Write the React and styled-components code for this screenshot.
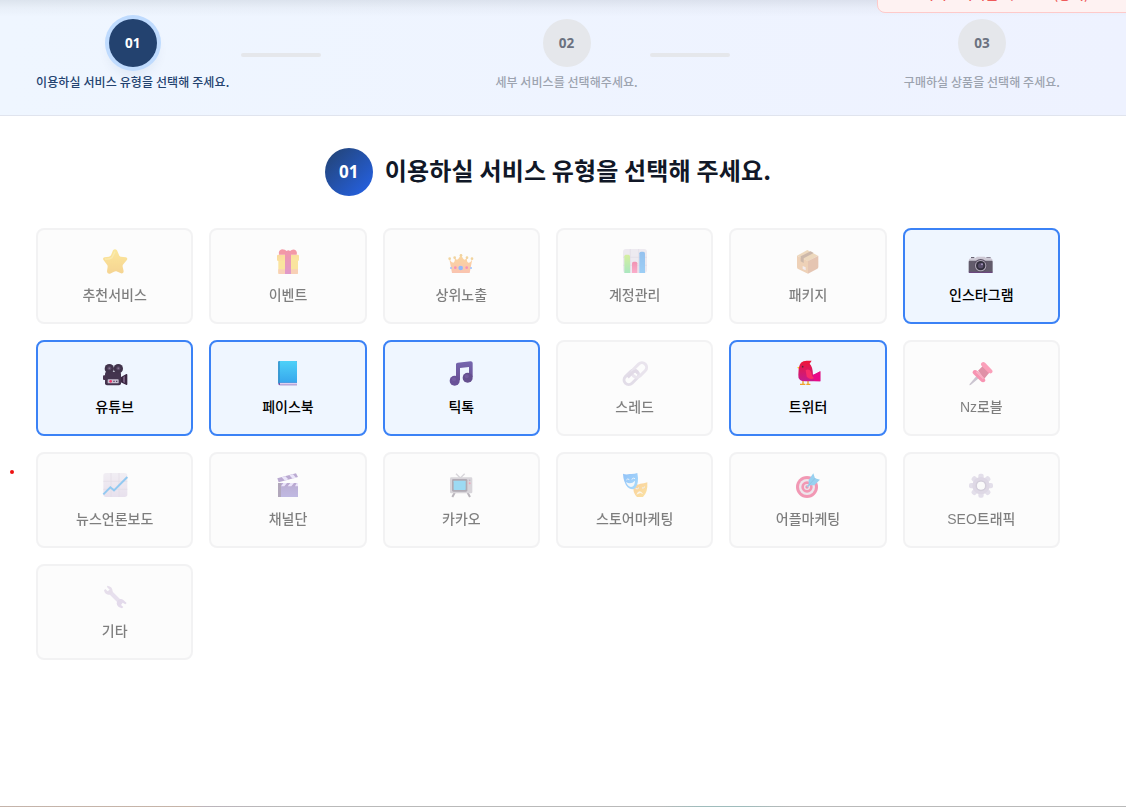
import React from "react";
import styled, { createGlobalStyle, css } from "styled-components";

const Global = createGlobalStyle`
  *, *::before, *::after { box-sizing: border-box; }
  html, body { margin: 0; padding: 0; background: #fff; }
  body {
    font-family: "Noto Sans CJK KR", "Noto Sans", sans-serif;
    color: #000;
    overflow: hidden;
  }
`;

const Page = styled.div`
  position: relative;
  display: flex;
  flex-direction: column;
  height: 807px;
  overflow: hidden;
  background: #fff;
`;

const StepBar = styled.header`
  display: flex;
  justify-content: space-between;
  height: 116px;
  padding: 19px 66px 24px 36px;
  border-bottom: 1px solid #e0e4ee;
  background: linear-gradient(to bottom, rgba(30, 41, 59, 0.09), rgba(30, 41, 59, 0.03) 8px, transparent 17px),
    linear-gradient(to right, #eff6ff, #eef2ff);
`;

const Step = styled.div`
  display: flex;
  align-items: center;
  gap: 12px;
`;

const StepBody = styled.div`
  display: flex;
  flex-direction: column;
  align-items: center;
  gap: 7px;
`;

const StepNumber = styled.div`
  display: grid;
  place-items: center;
  width: 48px;
  height: 48px;
  border-radius: 50%;
  font: 700 13.5px/20px "Noto Sans", sans-serif;
  color: ${(p) => (p.$active ? "#fff" : "#6b7280")};
  background: ${(p) => (p.$active ? "#23426f" : "#e5e7eb")};
  ${(p) =>
    p.$active &&
    css`
      box-shadow: 0 0 0 4px #bfdbfe, 0 8px 12px rgba(30, 58, 110, 0.08);
    `}
`;

const StepLabel = styled.div`
  padding-bottom: 1px;
  font-size: 12px;
  line-height: 16px;
  font-weight: 500;
  white-space: nowrap;
  letter-spacing: ${(p) => (p.$active ? "0.11px" : "0.06px")};
  color: ${(p) => (p.$active ? "#23426f" : "#9ca3af")};
`;

const StepLine = styled.div`
  width: 80px;
  height: 4px;
  border-radius: 2px;
  background: #e5e7eb;
`;

const Notice = styled.div`
  position: absolute;
  top: -31px;
  left: 877px;
  display: flex;
  gap: 39px;
  width: 262px;
  height: 44px;
  padding: 13px 0 0 43px;
  border: 1px solid #fecaca;
  border-radius: 8px;
  background: #fef2f2;
  color: #ef5a5a;
  font-size: 14px;
  line-height: 20px;
  font-weight: 500;
  white-space: nowrap;
`;

const Main = styled.main`
  display: flex;
  flex-direction: column;
  gap: 32px;
  padding: 32px 66px 0 36px;
`;

const Heading = styled.div`
  display: flex;
  align-items: center;
  justify-content: center;
  gap: 12px;
`;

const HeadingNumber = styled.div`
  display: grid;
  place-items: center;
  width: 48px;
  height: 48px;
  padding-bottom: 1px;
  border-radius: 50%;
  font: 700 17px/28px "Noto Sans", sans-serif;
  color: #fff;
  background: linear-gradient(135deg, #23426f, #2563eb);
`;

const Title = styled.h2`
  margin: 0;
  padding-bottom: 4px;
  font-size: 24px;
  line-height: 32px;
  font-weight: 700;
  letter-spacing: 0.17px;
  color: #111827;
`;

const Grid = styled.div`
  display: grid;
  grid-template-columns: repeat(6, 1fr);
  gap: 16px;
`;

const Card = styled.button`
  display: flex;
  flex-direction: column;
  align-items: center;
  gap: 7px;
  height: 96px;
  padding: 16px 0;
  border: 2px solid ${(p) => (p.$on ? "#3b82f6" : "#e6e6e8")};
  border-radius: 8px;
  background: ${(p) => (p.$on ? "#eff6ff" : "#fafafa")};
  opacity: ${(p) => (p.$on ? 1 : 0.5)};
  font-family: inherit;
  color: #000;
`;

const IconBox = styled.span`
  display: grid;
  place-items: center;
  height: 32px;
  filter: ${(p) => (p.$on ? "none" : "saturate(1.1) brightness(0.97)")};
  svg {
    width: 24px;
    height: 24px;
    overflow: visible;
  }
`;

const CardLabel = styled.span`
  padding-bottom: 1px;
  font-family: "Liberation Sans", "Noto Sans CJK KR", sans-serif;
  font-size: 14px;
  line-height: 20px;
  font-weight: 500;
  white-space: nowrap;
`;

const Dot = styled.i`
  position: absolute;
  left: 9.5px;
  top: 469.5px;
  width: 4px;
  height: 4px;
  border-radius: 50%;
  background: #ee1111;
`;

const BottomEdge = styled.div`
  height: 1px;
  margin-top: auto;
  background: linear-gradient(
    to right,
    #c4b3aa 0,
    #c6b4a8 190px,
    #bbb4bb 205px,
    #b9b9b9 290px,
    #b9b9b9 660px,
    #9fbcbc 700px,
    #9fbcbc 745px,
    #b9b9b9 790px
  );
`;

const Lg = ({ id, from, to, v = true }) => (
  <linearGradient id={id} x1="0" y1="0" x2={v ? "0" : "1"} y2="1">
    <stop offset="0" stopColor={from} />
    <stop offset="1" stopColor={to} />
  </linearGradient>
);

const art = {
  star: (
    <>
      <Lg id="star" from="#ffd74a" to="#eeb035" />
      <path
        d="M30 1Q36-6 42 1L49 17Q51 20 54 20L68 22Q76 24 71 31L61 43Q58 46 59 50L62 64Q62 72 54 70L40 64Q37 63 33 65L21 71Q12 73 12 64L14 50Q14 46 11 43L2 31Q-3 24 5 22L18 20Q22 19 24 16Z"
        fill="url(#star)"
      />
      <path d="M6 27Q20 28 27 23L36 5" fill="none" stroke="#ffe98a" strokeWidth="4" opacity=".6" />
    </>
  ),
  gift: (
    <>
      <Lg id="gift" from="#ffb84e" to="#ffd752" v={false} />
      <Lg id="ribbon" from="#e0355a" to="#bd3b96" />
      <rect x="7" y="28" width="59" height="44" rx="3" fill="#ffd04f" />
      <path d="M7 58H66V69Q66 72 62 72H10Q7 72 7 69Z" fill="#f4a878" />
      <rect x="3" y="14" width="66" height="19" rx="4" fill="url(#gift)" />
      <path d="M9 14Q6 1 18-2Q28-2 32 3Q37-1 42 3Q48-3 56-1Q65 3 62 14Z" fill="#e23a54" />
      <rect x="27" y="3" width="18" height="69" fill="url(#ribbon)" />
    </>
  ),
  crown: (
    <>
      <Lg id="crown" from="#fcb94a" to="#fb8f6c" />
      <path
        d="M9 69L1 27Q7 38 13 38Q19 36 17 22Q25 40 36 12Q45 40 54 22Q52 36 58 38Q66 38 70 27L62 69Z"
        fill="url(#crown)"
      />
      <g fill="#e6b04d">
        <circle cx="2" cy="26" r="4" />
        <circle cx="17" cy="23" r="4" />
        <circle cx="36" cy="16" r="4" />
        <circle cx="54" cy="23" r="4" />
        <circle cx="69" cy="26" r="4" />
      </g>
      <circle cx="35" cy="54" r="7" fill="#2f78ff" />
      <circle cx="19" cy="53" r="4" fill="#ea2f6f" />
      <circle cx="53" cy="53" r="4" fill="#ea2f6f" />
      <circle cx="6" cy="54" r="3" fill="#4a8bff" />
      <circle cx="66" cy="54" r="3" fill="#4a8bff" />
    </>
  ),
  bars: (
    <>
      <rect x="0" y="-3" width="72" height="72" rx="9" fill="#e3dde9" />
      <path d="M22-3V69M47-3V69M0 22H72M0 46H72" stroke="#c8c0d2" strokeWidth="2" />
      <Lg id="bg" from="#b4e552" to="#64d58c" />
      <Lg id="bp" from="#dd2f6a" to="#f4659a" />
      <Lg id="bb" from="#3588dc" to="#46a2ec" />
      <path d="M4 69V19Q4 14 9 14H16Q21 14 21 19V69Z" fill="url(#bg)" />
      <path d="M27 69V40Q27 35 32 35H38Q43 35 43 40V69Z" fill="url(#bp)" />
      <path d="M49 69V10Q49 5 54 5H61Q66 5 66 10V69Z" fill="url(#bb)" />
    </>
  ),
  box: (
    <>
      <path d="M3 17L34 0L66 17L36 34Z" fill="#dfb987" />
      <path d="M3 17L36 33V71L5 56Q3 54 3 51Z" fill="#e0aa7a" />
      <path d="M36 33L67 17V51Q67 54 64 56L36 71Z" fill="#cd9170" />
      <path d="M14 19L44 4L53 9L23 25V39L14 34Z" fill="#9d775e" />
      <path d="M20 48L29 52V61L20 57Z" fill="#efe1e8" />
    </>
  ),
  camera: (
    <>
      <rect x="6" y="21" width="10" height="4" fill="#696372" />
      <rect x="52" y="21" width="13" height="4" fill="#8f8998" />
      <path d="M-1 33Q-1 25 5 25H18L24 20H47L53 25H65Q71 25 71 33Z" fill="#cdc8d4" />
      <rect x="-1" y="32" width="72" height="37" rx="3" fill="#625b6b" />
      <path d="M-1 65H71V66Q71 69 67 69H3Q-1 69-1 66Z" fill="#6c477f" />
      <circle cx="35" cy="47" r="20" fill="#5c5266" />
      <circle cx="35" cy="47" r="17" fill="#b1a9b8" />
      <circle cx="35" cy="47" r="14" fill="#332f3e" />
      <circle cx="35" cy="47" r="8" fill="#574d69" />
      <circle cx="39" cy="43" r="3" fill="#a798c0" />
    </>
  ),
  movie: (
    <>
      <path d="M53 46L70 36Q73 35 73 39V66Q73 70 69 68L53 61Z" fill="#3b2743" />
      <path d="M60 45L66 42V63L60 60Z" fill="#735d7d" />
      <rect x="0" y="40" width="8" height="14" rx="3" fill="#48334f" />
      <rect x="6" y="29" width="48" height="41" rx="6" fill="#44344e" />
      <circle cx="19" cy="20" r="14" fill="#41334b" />
      <circle cx="46" cy="20" r="14" fill="#41334b" />
      <circle cx="19" cy="19" r="6" fill="#5b4a66" />
      <circle cx="46" cy="19" r="6" fill="#5b4a66" />
      <circle cx="19" cy="19" r="2.5" fill="#8a7896" />
      <circle cx="46" cy="19" r="2.5" fill="#8a7896" />
      <rect x="14" y="52" width="33" height="12" rx="2" fill="#c8bfd1" />
      <circle cx="23" cy="58" r="4" fill="#ed336a" />
      <path d="M31 58H35M39 58H43" stroke="#554661" strokeWidth="4" />
    </>
  ),
  book: (
    <>
      <Lg id="book" from="#4ed1f8" to="#36a5ec" />
      <path d="M7 1Q7-3 12-3H60Q63-3 63 0V70H12Q7 70 7 65Z" fill="#7659ad" />
      <rect x="12" y="62" width="51" height="6" fill="#ddd0ef" />
      <path d="M7 1Q7-3 12-3H60Q63-3 63 0V62H12Q8 62 7 65Z" fill="url(#book)" />
      <path d="M7 1Q7-3 11-3V62Q8 62 7 65Z" fill="#2e8fc9" />
    </>
  ),
  note: (
    <>
      <Lg id="note" from="#7566ae" to="#6b5296" />
      <path d="M21 7Q21 3 26 2L65-2Q71-2 71 3V45H60V15L33 18V55H21Z" fill="url(#note)" />
      <circle cx="17" cy="56" r="15" fill="#695298" />
      <circle cx="56" cy="47" r="15" fill="#66508f" />
      <circle cx="15" cy="52" r="6" fill="#8068ac" opacity=".5" />
      <circle cx="53" cy="43" r="6" fill="#8068ac" opacity=".5" />
    </>
  ),
  link: (
    <g fill="none" strokeWidth="9">
      <rect x="-25" y="-14" width="50" height="28" rx="14" transform="translate(25 46) rotate(-45)" stroke="#cdc3d8" />
      <rect x="-25" y="-14" width="50" height="28" rx="14" transform="translate(49 24) rotate(-45)" stroke="#dad1e2" />
      <path d="M14 46L28 32Q39 23 44 34" stroke="#c9bdd4" />
    </g>
  ),
  bird: (
    <>
      <Lg id="bird" from="#ee1736" to="#c41b91" />
      <path d="M21 51V66M36 51V66M12 67H28M31 67H43" fill="none" stroke="#eea329" strokeWidth="4" />
      <path d="M12 13L3 17L12 22Z" fill="#ffc21d" />
      <path d="M8 21Q10-4 32-4H47L41 5Q50 13 51 38L57 36L73 28V58H28Q5 57 7 38Z" fill="url(#bird)" />
      <path d="M50 40L73 28V58L54 57Z" fill="#e80988" />
      <path d="M29 24Q41 20 45 30Q48 44 54 49Q42 55 32 44Z" fill="#fa2b68" />
      <circle cx="20" cy="14" r="2.5" fill="#5d253f" />
    </>
  ),
  pin: (
    <>
      <path d="M1 70L2 66L23 41L30 48L5 69Z" fill="#9d91a7" />
      <path d="M27 26L42 11L62 31L46 50Z" fill="#bd2a54" />
      <path d="M12 27Q18 21 26 28L47 50Q52 57 45 60Q40 62 34 56L14 37Q8 32 12 27Z" fill="#ea3269" />
      <path d="M38 2Q43-3 49 3L69 24Q73 29 68 33Q63 36 57 31L39 13Q33 7 38 2Z" fill="#f94a7a" />
      <path d="M22 29L43 50" stroke="#ff6c93" strokeWidth="4" />
    </>
  ),
  trend: (
    <>
      <Lg id="trend" from="#ebe5ef" to="#d8cbe2" />
      <rect x="1" y="-3" width="72" height="72" rx="8" fill="url(#trend)" />
      <path d="M24-3V69M48-3V69M1 22H73M1 46H73" stroke="#cabfd1" strokeWidth="2" />
      <path d="M1 61L22 40L33 49L73 9" fill="none" stroke="#3298e2" strokeWidth="6" />
    </>
  ),
  clapper: (
    <>
      <Lg id="clap" from="#7c62a6" to="#857ac6" />
      <rect x="6" y="27" width="60" height="42" fill="url(#clap)" />
      <rect x="6" y="27" width="9" height="42" fill="#67547a" />
      <path d="M4 13L60-2L66 9L8 25Z" fill="#7a5ba4" />
      <path d="M17 10L28 7L37 16L27 20ZM40 4L51 1L60 11L50 14Z" fill="#ded4fa" />
      <rect x="15" y="27" width="51" height="10" fill="#7a5ba4" />
      <path d="M22 27H33L25 37H15ZM43 27H54L46 37H35ZM62 27H66V37H57Z" fill="#ded4fa" />
    </>
  ),
  tv: (
    <>
      <path d="M21-1L34 12L47-1" fill="none" stroke="#b8b4bd" strokeWidth="4" />
      <path d="M17 56L10 69M56 56L63 69" stroke="#79727e" strokeWidth="6" />
      <rect x="3" y="10" width="67" height="48" rx="4" fill="#b7b2bc" />
      <rect x="9" y="15" width="46" height="38" rx="4" fill="#665c6d" />
      <rect x="14" y="20" width="36" height="28" rx="2" fill="#46bbe8" />
      <circle cx="62" cy="19" r="2.5" fill="#8a758d" />
      <circle cx="62" cy="28" r="3" fill="#dd587d" />
    </>
  ),
  masks: (
    <>
      <Lg id="m1" from="#3089ec" to="#64bfff" v={false} />
      <Lg id="m2" from="#ffaa48" to="#ffcc59" v={false} />
      <path d="M31 30Q43 34 52 29Q63 29 73 25Q75 55 60 69H42Q28 56 31 30Z" fill="url(#m2)" />
      <path d="M0-1Q9 3 20 0Q33 1 43-3Q49 27 37 42Q27 51 14 40Q1 24 0-1Z" fill="url(#m1)" />
      <path d="M9 24Q24 33 36 20Q36 38 24 39Q14 37 9 24Z" fill="#eef8ff" />
      <path d="M10 18Q14 12 19 17M26 16Q31 10 36 14M38 44Q44 46 48 41M57 42Q62 43 66 38" fill="none" stroke="#e3f0fb" strokeWidth="3" />
      <path d="M40 62Q49 42 61 61L52 57Z" fill="#fff4dd" />
    </>
  ),
  target: (
    <>
      <circle cx="33" cy="39" r="33" fill="#e03a6e" />
      <circle cx="33" cy="39" r="24" fill="#e5d5e0" />
      <circle cx="33" cy="39" r="17" fill="#e03a6e" />
      <circle cx="33" cy="39" r="9" fill="#e5d5e0" />
      <circle cx="33" cy="39" r="5" fill="#dc2e66" />
      <path d="M33 39L58 14" stroke="#4b9fd4" strokeWidth="5" />
      <path d="M38 34V18L52-2L57 13L72 17L55 34Z" fill="#3ea7e2" />
      <path d="M38 34L58 12" stroke="#2f8bc8" strokeWidth="3" />
    </>
  ),
  gear: (
    <>
      <g fill="#cfc6dc">
        {[0, 45, 90, 135, 180, 225, 270, 315].map((a) => (
          <rect key={a} x="28" y="-1" width="16" height="23" rx="6" transform={`rotate(${a} 36 35)`} />
        ))}
      </g>
      <circle cx="36" cy="35" r="19" fill="none" stroke="#c3b9d1" strokeWidth="14" />
      <circle cx="36" cy="35" r="14" fill="none" stroke="#ada3bb" strokeWidth="5" />
      <circle cx="36" cy="35" r="11.5" fill="#fff" />
    </>
  ),
  wrench: (
    <>
      <path d="M18 15L54 51" stroke="#d7cae4" strokeWidth="12" />
      <path d="M13-1Q29 1 29 17Q26 27 16 26Q6 26 3 13L7 9L14 16L20 11L12 3Z" fill="#d3c5de" />
      <path d="M43 44Q52 35 61 42L71 51L67 55L59 50L54 57L61 63L57 67Q42 64 41 52Z" fill="#cdbddc" />
    </>
  ),
};

const steps = [
  ["01", "이용하실 서비스 유형을 선택해 주세요."],
  ["02", "세부 서비스를 선택해주세요."],
  ["03", "구매하실 상품을 선택해 주세요."],
];

const services = [
  ["star", "추천서비스"],
  ["gift", "이벤트"],
  ["crown", "상위노출"],
  ["bars", "계정관리"],
  ["box", "패키지"],
  ["camera", "인스타그램", true],
  ["movie", "유튜브", true],
  ["book", "페이스북", true],
  ["note", "틱톡", true],
  ["link", "스레드"],
  ["bird", "트위터", true],
  ["pin", "Nz로블"],
  ["trend", "뉴스언론보도"],
  ["clapper", "채널단"],
  ["tv", "카카오"],
  ["masks", "스토어마케팅"],
  ["target", "어플마케팅"],
  ["gear", "SEO트래픽"],
  ["wrench", "기타"],
];

export default function App() {
  return (
    <>
      <Global />
      <Page>
        <StepBar>
          {steps.map(([number, label], i) => (
            <Step key={number}>
              <StepBody>
                <StepNumber $active={i === 0}>{number}</StepNumber>
                <StepLabel $active={i === 0}>{label}</StepLabel>
              </StepBody>
              {i < 2 && <StepLine />}
            </Step>
          ))}
        </StepBar>
        <Main>
          <Heading>
            <HeadingNumber>01</HeadingNumber>
            <Title>이용하실 서비스 유형을 선택해 주세요.</Title>
          </Heading>
          <Grid>
            {services.map(([icon, label, on]) => (
              <Card key={label} $on={on}>
                <IconBox $on={on}>
                  <svg viewBox="0 0 72 72" aria-hidden="true">
                    {art[icon]}
                  </svg>
                </IconBox>
                <CardLabel>{label}</CardLabel>
              </Card>
            ))}
          </Grid>
        </Main>
        <BottomEdge />
        <Notice>
          <span>서비스지역을 시</span>
          <span>(공지)</span>
        </Notice>
        <Dot />
      </Page>
    </>
  );
}
